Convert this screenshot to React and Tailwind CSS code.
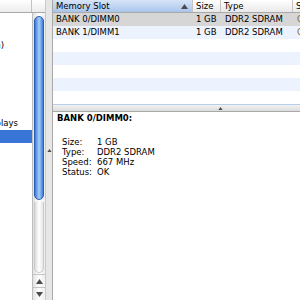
import React from "react";

const slots = [
  { name: "BANK 0/DIMM0", size: "1 GB", type: "DDR2 SDRAM", status: "OK" },
  { name: "BANK 1/DIMM1", size: "1 GB", type: "DDR2 SDRAM", status: "OK" },
];

const sidebar = [
  "Hardware",
  "ATA",
  "Audio (Built In)",
  "Bluetooth",
  "Diagnostics",
  "Disc Burning",
  "Ethernet Cards",
  "FireWire",
  "Graphics/Displays",
  "Memory",
];

// only the tail end of each label peeks out of the scrolled sidebar
const visibleWidth = { 2: "w-[4px]", 8: "w-[18px]" };

function Caret({ down = false, className = "" }) {
  return (
    <svg width="7" height="5" viewBox="0 0 7 5" className={className}>
      <path d={down ? "M0 0 L7 0 L3.5 5 Z" : "M0 5 L7 5 L3.5 0 Z"} fill="#4a4a4a" />
    </svg>
  );
}

function Sidebar() {
  return (
    <div className="w-[45px] flex flex-col shrink-0">
      {/* HEADER */}
      <div className="h-[13px] flex shrink-0 border-b border-[#a9a9a9] bg-gradient-to-b from-white to-[#ececec]">
        <div className="w-[32px] border-r border-[#c4c4c4]" />
        <div className="flex-1" />
      </div>

      <div className="flex-1 flex">
        {/* LIST */}
        <div className="w-[32px] bg-white flex flex-col">
          {sidebar.map((item, i) => (
            <div
              key={item}
              className={`h-[13px] flex items-center ${i === 9 ? "bg-[#3875d7]" : ""}`}
            >
              {visibleWidth[i] && (
                <div className={`${visibleWidth[i]} overflow-hidden flex justify-end whitespace-nowrap`}>
                  {item}
                </div>
              )}
            </div>
          ))}
        </div>

        {/* SCROLLBAR */}
        <div className="w-[13px] flex flex-col border-l border-[#bdbdbd] bg-gradient-to-r from-[#e2e2e2] via-white to-[#eeeeee]">
          <div className="flex-1 flex flex-col pt-[3px]">
            <div className="mx-[1px] h-[184px] rounded-full border border-[#2c5fb4] bg-gradient-to-r from-[#3b78d4] via-[#a6cff9] to-[#3f7dd8]" />
            <div className="mx-[1px] mt-[2px] h-[71px] rounded-b-full border border-t-0 border-[#c9c9c9] bg-gradient-to-r from-[#dcdcdc] via-white to-[#e6e6e6]" />
          </div>
          <div className="h-[13px] flex items-center justify-center border-t border-[#c4c4c4]">
            <Caret />
          </div>
          <div className="h-[13px] flex items-center justify-center border-t border-[#c4c4c4]">
            <Caret down />
          </div>
        </div>
      </div>
    </div>
  );
}

function HeaderCell({ children, className = "" }) {
  return (
    <div className={`h-full flex items-center px-[3px] border-r border-[#c4c4c4] shrink-0 ${className}`}>
      {children}
    </div>
  );
}

export default function App() {
  const rowColors = ["bg-[#d6d6d6]", "bg-[#edf3fe]", "bg-white", "bg-[#edf3fe]", "bg-white", "bg-[#edf3fe]", "bg-white", "bg-[#edf3fe]"];

  return (
    <div className="w-[300px] h-[300px] overflow-hidden flex bg-white text-black font-['DejaVu_Sans',sans-serif] text-[8.5px] leading-none">
      <Sidebar />

      {/* VERTICAL SPLITTER */}
      <div className="w-[7px] shrink-0 flex items-center justify-center border-l border-[#b8cde9] bg-[#e6e6e6]">
        <Caret className="w-[5px] h-[3px]" />
      </div>

      {/* RIGHT PANE */}
      <div className="flex-1 flex flex-col border-l border-[#a9a9a9] min-w-0">
        {/* TABLE */}
        <div className="h-[104px] overflow-hidden flex flex-col shrink-0">
          <div className="h-[13px] flex shrink-0 border-b border-[#a9a9a9] bg-gradient-to-b from-white to-[#e9e9e9]">
            <HeaderCell className="w-[140px] justify-between bg-gradient-to-b from-[#d6e4f7] to-[#a9c5ec]">
              <span>Memory Slot</span>
              <Caret className="mr-[1px]" />
            </HeaderCell>
            <HeaderCell className="w-[28px]">Size</HeaderCell>
            <HeaderCell className="w-[72px]">Type</HeaderCell>
            <HeaderCell className="w-[60px]">Status</HeaderCell>
          </div>

          {rowColors.map((color, i) => {
            const slot = slots[i];
            return (
              <div key={i} className={`h-[13px] flex items-center shrink-0 whitespace-nowrap ${color}`}>
                {slot && (
                  <>
                    <div className="w-[140px] px-[3px] shrink-0">{slot.name}</div>
                    <div className="w-[28px] px-[3px] shrink-0">{slot.size}</div>
                    <div className="w-[72px] px-[4px] shrink-0">{slot.type}</div>
                    <div className="w-[60px] px-[4px] shrink-0 text-[#8a6a2a]">{slot.status}</div>
                  </>
                )}
              </div>
            );
          })}
        </div>

        {/* HORIZONTAL SPLITTER */}
        <div className="h-[8px] shrink-0 flex items-center pl-[165px] border-t border-[#b8cde9] border-b border-b-[#a9a9a9] bg-gradient-to-b from-[#f2f2f2] to-[#dcdcdc]">
          <Caret className="w-[5px] h-[3px]" />
        </div>

        {/* DETAILS */}
        <div className="flex-1 bg-white pl-[4px] pt-[1px]">
          <div className="h-[10px] flex items-center font-bold">BANK 0/DIMM0:</div>
          <div className="mt-[14px] pl-[5px] flex flex-col">
            {[
              ["Size:", "1 GB"],
              ["Type:", "DDR2 SDRAM"],
              ["Speed:", "667 MHz"],
              ["Status:", "OK"],
            ].map(([label, value]) => (
              <div key={label} className="h-[10px] flex items-center">
                <span className="w-[35px]">{label}</span>
                <span>{value}</span>
              </div>
            ))}
          </div>
        </div>
      </div>
    </div>
  );
}
